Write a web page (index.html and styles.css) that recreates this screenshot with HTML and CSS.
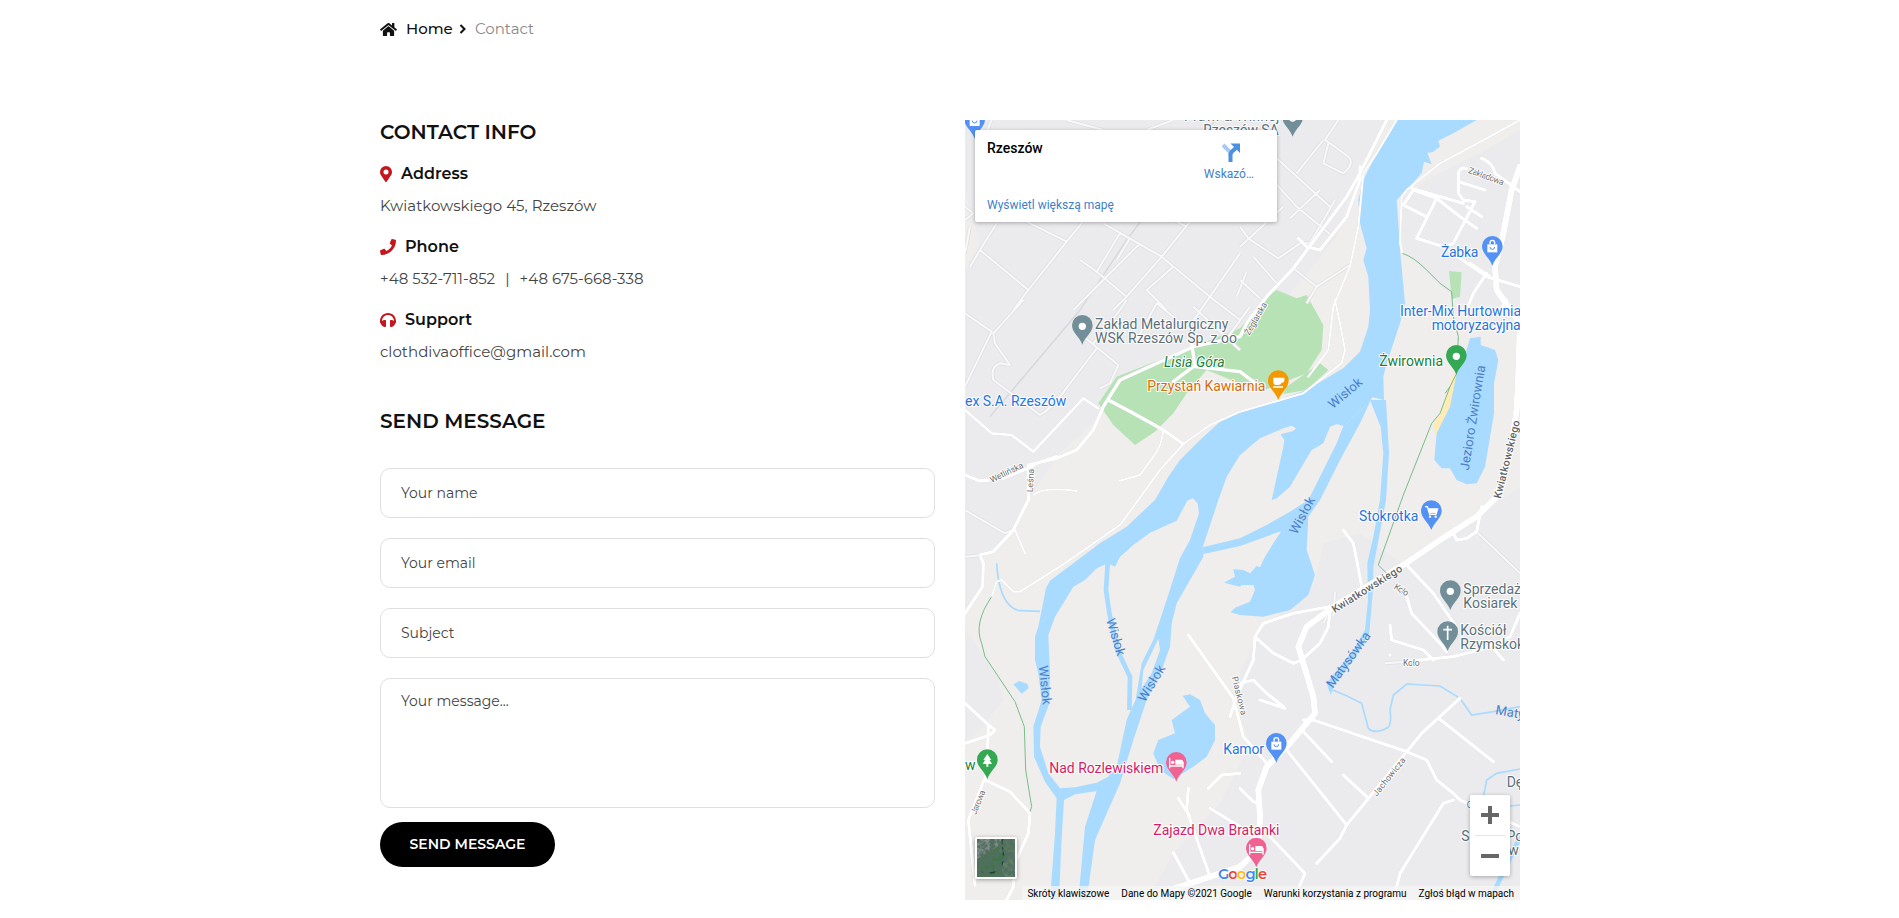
FILE: index.html
```html
<!DOCTYPE html>
<html lang="en">
<head>
<meta charset="utf-8">
<title>Contact</title>
<link rel="stylesheet" href="styles.css">
</head>
<body>
<div class="container">
  <nav class="breadcrumb">
    <svg class="home-icon" viewBox="0 0 576 512"><path d="M280.4 148.3 96 300.1V464a16 16 0 0 0 16 16l112-.3a16 16 0 0 0 16-16V368a16 16 0 0 1 16-16h64a16 16 0 0 1 16 16v95.6a16 16 0 0 0 16 16l112 .3a16 16 0 0 0 16-16V300L295.7 148.300a12.200 12.200 0 0 0-15.300 0zM571.600 251.500 488 182.600V44a12 12 0 0 0-12-12h-56a12 12 0 0 0-12 12v72.600L318.500 43a48 48 0 0 0-61 0L4.300 251.500a12 12 0 0 0-1.600 16.900l25.500 31a12 12 0 0 0 16.900 1.600l235.200-193.700a12.200 12.200 0 0 1 15.300 0L530.900 301a12 12 0 0 0 16.900-1.600l25.500-31a12 12 0 0 0-1.700-16.900z"/></svg>
    <a class="crumb">Home</a>
    <svg class="chevron" viewBox="0 0 8 10"><path d="M1.500 1 5.500 5l-4 4"/></svg>
    <span class="crumb-current">Contact</span>
  </nav>
  <main class="columns">
    <section class="left">
      <h2 class="title title-info">CONTACT INFO</h2>
      <div class="details">
        <div>
          <h3 class="label"><svg class="ico pin-ico" viewBox="0 0 384 512"><path d="M172.300 501.700C27 291 0 269.400 0 192a192 192 0 0 1 384 0c0 77.400-27 99-172.300 309.700a24 24 0 0 1-39.400 0zM192 272a80 80 0 1 0 0-160 80 80 0 0 0 0 160z"/></svg><span>Address</span></h3>
          <p class="value">Kwiatkowskiego 45, Rzeszów</p>
        </div>
        <div>
          <h3 class="label"><svg class="ico" viewBox="0 0 512 512"><path d="M493.400 24.600l-104-24c-11.300-2.600-22.900 3.300-27.500 13.900l-48 112a24 24 0 0 0 6.900 28l60.600 49.600c-36 76.700-98.900 140.500-177.200 177.200l-49.600-60.600a24 24 0 0 0-28-6.900l-112 48C3.900 366.500-2 378.100.600 389.400l24 104C27.100 504.200 36.700 512 48 512c256.100 0 464-207.500 464-464 0-11.200-7.700-20.900-18.600-23.400z"/></svg><span>Phone</span></h3>
          <p class="value">+48 532-711-852<span class="bar">|</span>+48 675-668-338</p>
        </div>
        <div>
          <h3 class="label"><svg class="ico" viewBox="0 0 512 512"><path d="M256 32C114.500 32 0 146.500 0 288v48a32 32 0 0 0 17.700 28.600l14.400 7.200C34.200 429.600 83.500 480 144 480h24a24 24 0 0 0 24-24V280a24 24 0 0 0-24-24h-24c-31.300 0-59.700 13.500-80 34.900V288c0-105.900 86.100-192 192-192s192 86.100 192 192v2.900C427.700 269.500 399.300 256 368 256h-24a24 24 0 0 0-24 24v176a24 24 0 0 0 24 24h24c60.500 0 109.800-50.400 111.900-108.200l14.400-7.200A32 32 0 0 0 512 336v-48C512 146.500 397.500 32 256 32z"/></svg><span>Support</span></h3>
          <p class="value mail">clothdivaoffice@gmail.com</p>
        </div>
      </div>
      <h2 class="title title-send">SEND MESSAGE</h2>
      <form class="form">
        <input class="field" placeholder="Your name">
        <input class="field" placeholder="Your email">
        <input class="field" placeholder="Subject">
        <textarea class="field area" placeholder="Your message..."></textarea>
        <button class="send" type="button">SEND MESSAGE</button>
      </form>
    </section>
    <section class="map">
      <svg class="map-canvas" viewBox="15 30 1665 2340">
        <rect class="land" x="15" y="30" width="1665" height="2340"/>
        <g class="urban">
          <path d="M15 480 60 400 15 250V30H1280L1190 190 1130 380 1000 540 920 640 700 720 470 810 440 900 290 1040 15 1110Z"/>
          <path d="M15 1110 200 1060 290 1040 205 1170 160 1260 70 1340V1440L15 1500Z"/>
          <path d="M15 1560 60 1620 110 1700 130 1770 60 1860 15 1900Z"/>
          <path d="M1320 270 1400 210 1560 130 1680 60V590L1500 580 1330 420Z"/>
          <path d="M1340 1370 1680 1130V2370H900L780 2320 560 2370 640 2230 780 2080 870 1900 820 1770 840 1690 900 1560 1060 1430 1090 1300 1200 1270Z"/>
        </g>
        <g class="park">
          <path d="M415 880 470 800 650 730 840 655 920 560 950 540 1010 565 1040 555 1090 645 1085 720 1040 790 900 845 740 780 680 850 640 910 585 965 525 1005 460 945Z"/>
          <path d="M980 830 1080 760 1105 780 1040 840 970 852Z"/>
          <path d="M1467 483 1505 487 1500 560 1475 567Z"/>
        </g>
        <path class="sand" d="M1480 790 1492 800 1475 880 1430 975 1418 945 1440 910Z"/>
        <g class="water">
          <path d="M1310 30 1280 80 1240 150 1210 210 1195 270 1200 340 1220 415 1210 450 1225 500 1230 600 1225 650 1200 725 1150 775 1040 840 840 908 780 935 720 990 660 1050 625 1100 585 1170 500 1250 420 1300 270 1412 258 1435 235 1550 225 1580 225 1650 235 1690 245 1770 220 1850 222 1940 255 2015 290 2065 285 2170 270 2370H297L304 2200 312 2070 345 2053 412 2043 445 2000 410 2018 345 2032 300 2035 265 1990 240 1910 242 1850 268 1780 270 1690 265 1575 285 1520 340 1430 375 1410 410 1375 443 1360 465 1370 480 1340 520 1305 570 1268 650 1232 682 1172 698 1165 712 1178 740 1200 775 1170 800 1100 840 1035 900 985 970 955 995 947 1008 955 1000 963 962 973 973 990 970 1010 935 1170 950 1165 990 1130 1025 1070 1055 1020 1090 1000 1110 950 1130 942 1150 948 1230 875 1237 862 1272 870 1270 800 1280 760 1320 640 1335 580 1320 420 1315 340 1310 270 1320 260 1385 190 1392 155 1415 163 1402 128 1417 127 1440 110 1435 92 1480 70 1550 30Z"/>
          <path d="M1230 875 1200 940 1140 1050 1080 1170 1045 1220 1040 1320 1065 1395 1045 1455 990 1500 910 1520 840 1515 812 1507 832 1487 870 1475 885 1440 880 1425 840 1430 792 1418 825 1400 820 1378 850 1380 870 1390 890 1368 900 1372 915 1340 940 1300 964 1263 840 1308 730 1332 728 1312 840 1285 920 1245 990 1205 1045 1170 1080 1100 1130 1000 1150 948Z"/>
          <path d="M1230 870 1262 950 1270 1030 1260 1170 1240 1280 1222 1360 1224 1470 1215 1560 1180 1620 1120 1695 1100 1720 1112 1755 1122 1725 1180 1650 1228 1570 1238 1450 1240 1370 1265 1240 1278 1170 1287 1030 1278 870Z"/>
          <path d="M712 1175 717 1210 690 1290 660 1345 620 1470 580 1590 545 1660 527 1770 515 1795 500 1830 470 1970 445 2000 410 2043 375 2150 355 2370H380L405 2190 480 2020 520 1890 560 1770 605 1680 630 1610 635 1540 650 1480 690 1410 730 1340 728 1312 775 1170Z"/>
          <path d="M1530 685 1562 680 1562 705 1605 720 1615 750 1602 820 1602 910 1575 1070 1550 1120 1520 1123 1490 1110 1470 1075 1445 1075 1423 1050 1430 970 1470 890 1490 790 1520 720Z"/>
          <path d="M668 1757 690 1753 720 1770 735 1810 752 1830 765 1845V1890L740 1940 700 1970 640 2007 600 1980 580 1930 595 1890 645 1870 635 1830 690 1790Z"/>
          <path d="M160 1723 178 1713 203 1722 206 1735 185 1751Z"/>
        </g>
        <path class="land" d="M595 1586 600 1620 575 1690 545 1735 550 1680Z"/>
        <path class="land" d="M843 1425H880L883 1440 868 1475 830 1492Z"/>
        <g class="stream">
          <path class="wide" d="M443 1360 438 1440 448 1510 472 1620 510 1700 508 1800"/>
          <path d="M110 1360Q115 1440 140 1475 160 1502 185 1502L240 1504"/>
          <path d="M1105 1735 1155 1755 1205 1780 1225 1855Q1245 1875 1285 1852 1295 1840 1290 1800L1300 1755 1340 1722 1440 1728 1500 1765 1535 1815 1600 1805 1680 1790"/>
          <path d="M1680 1977 1610 1990 1580 2010 1570 2060 1630 2090 1680 2085"/><path class="wide" d="M1680 2180 1600 2350"/>
        </g>
        <path class="rail" d="M90 920 360 600 500 390 560 310 720 100 765 30"/>
        <g class="minor-edge">
          <path id="minor-roads" d="M110 340 60 420 205 540 160 600M60 420 30 470M205 540 320 395 430 260M200 335 320 395M430 340 605 440 750 560 840 630M360 450 410 485 500 560 460 600M410 485 480 370M510 385 470 450M605 440 500 560M605 440 690 335M680 350 620 320M605 440 640 470 560 540 620 600M840 430 750 560 680 660M15 290 40 310 15 330M30 350 15 430M320 30 430 60M95 30 70 90M640 30 560 60M15 610 95 665 15 830M190 570 100 670 105 700 150 765 120 760Q90 770 100 810L240 915Q280 890 300 860L410 715M340 655 475 765 450 820 420 835M400 700 480 600 500 570M530 690 590 580 640 620M840 260 870 320M870 320 910 180 1010 290 1120 380M950 145 1110 290M840 410 970 290M840 350 865 385 955 445 1020 400M1080 240 990 325M1135 30 1095 90 1125 110 1170 145Q1180 165 1150 190L1090 160 1105 100M1090 90 1010 190M1125 270 1050 400 1020 400M1000 475 1070 530 1170 465M1070 530 1040 580M840 510 900 565M860 485 830 560M950 520 880 440M15 1200 135 1270 165 1255M15 1340 70 1335M1120 1520 1125 1445M1110 1500 1090 1540M1680 1390 1550 1265M1275 1660 1340 1655M340 600 540 400M700 590 840 720M870 590 790 700"/>
          <use href="#minor-roads" class="minor-core"/>
        </g>
        <g class="road">
          <path class="main" d="M15 900 95 970 155 975 220 1025 370 865 415 895"/>
          <path class="med" d="M1280 30 1200 190 1160 260 1000 475 920 560 860 640 840 680 700 710 480 810 430 890 400 960 350 1020 290 1045 205 1065M205 1065V1170L160 1260 100 1325 60 1335 70 1360 68 1430 15 1510M290 1040 230 1060 215 1070 130 1105 60 1113 15 1095M445 870 520 910 610 960 670 1002M695 700 705 770 840 785 900 830M700 770 640 815M1200 170V210L1160 320 1080 420 1040 410 1015 385"/>
          <path d="M670 1002 600 1080 535 1170 480 1245 300 1370 180 1445 160 1445 125 1410 110 1415 95 1460M670 1002 750 945 840 905M840 905 1030 850 1145 760 1155 720 1140 640 1125 570M1310 30 1250 130 1210 190 1195 350 1170 470 1120 590 1105 720 1045 800M610 960Q605 1010 580 1040L540 1095 480 1112M220 1155Q250 1130 350 1143M165 1260 195 1330M1680 30 1580 85 1440 160 1340 240 1325 260 1320 400 1327 430"/>
          <path class="med" d="M1565 145Q1600 160 1605 190L1680 245M1520 175Q1500 170 1495 190V250L1510 270 1545 275 1480 400 1450 410 1370 385 1430 265 1360 240 1330 285 1400 320M1355 235 1510 280M1430 265 1500 320 1550 355M1495 215 1575 240M1520 290 1565 320M1450 410 1580 500 1680 530M1580 490 1540 550 1520 600M1590 500 1530 460M1620 600 1640 570"/>
          <path class="big" d="M1680 170 1655 240 1630 370 1605 470 1610 540 1680 640 1675 800 1670 900 1650 1030 1610 1160 1550 1220 1440 1290 1330 1365 1120 1490 1040 1550 1015 1610 1060 1760 1065 1810 990 1900 920 1970 895 2040 900 2120 895 2220 840 2270 750 2300 660 2330 610 2345"/>
          <path class="med" d="M1110 1490 1000 1510 910 1540 885 1580 880 1650 830 1760 810 1820M1110 1500 1105 1550 1080 1600 1025 1650 1000 1660 940 1630 885 1580M1340 1365 1420 1450 1485 1545M1205 1430 1190 1350 1180 1300 1150 1260M1290 1635V1635M1340 1460 1355 1510 1440 1600 1460 1625M1290 1545 1295 1590 1390 1620 1420 1650M1330 1655 1480 1640 1560 1620 1650 1580 1680 1510M1605 1620 1630 1650M1565 1190 1550 1265 1520 1285 1490 1290 1480 1270M840 1720 880 1710 920 1750 970 1790M685 1575 820 1765 850 1880 925 1965M840 2035 880 2075 900 2080M1030 1830 1060 1830 1340 1925 1400 1950 1430 2010 1480 2050 1500 2070 1680 2150M1500 1765 1385 1870 1160 2145M1440 1828 1600 1955M1030 1865 1115 1955M980 1920 1160 2145 1140 2185 1070 2260M1150 1995 1225 2065M1480 2070 1450 2080 1320 2290 1300 2370M930 2180 1035 2290 1000 2370M840 1990 785 1995 745 2035M900 1770 975 1795M750 2095 840 2150 920 2210M685 2035 680 2100 750 2300M655 2065 690 2120M640 2228 690 2320M15 1780 80 1840 105 1860 90 1875 15 1900M85 1850 80 1990 25 2130 45 2325M75 2010 150 2045 210 2110 205 2170 165 2260 160 2330 140 2370"/>
        </g>
        <path class="trail" d="M95 1460Q40 1540 65 1600L75 1640 165 1775 193 1850 197 1980 215 2090 210 2105M1327 430Q1360 440 1400 480L1440 520 1475 545 1480 620 1495 680 1490 790 1470 830 1455 850M1470 830 1440 910 1415 940 1330 1155 1255 1365 1290 1400"/>

        <g class="street">
          <text x="1523" y="188" textLength="112" transform="rotate(20 1523 188)">Zakładowa</text>
          <text x="868" y="677" textLength="108" transform="rotate(-60 868 677)">Żeglarska</text>
          <text x="95" y="1119" textLength="108" transform="rotate(-26 95 1119)">Wetlińska</text>
          <text x="218" y="1147" textLength="70" transform="rotate(-87 218 1147)">Leśna</text>
          <text x="48" y="2115" textLength="76" transform="rotate(-68 48 2115)">Jarowa</text>
          <text x="815" y="1702" textLength="118" transform="rotate(76 815 1702)">Piaskowa</text>
          <text x="1250" y="2060" textLength="140" transform="rotate(-51 1250 2060)">Jachowicza</text>
          <text x="1300" y="1435" textLength="46" transform="rotate(32 1300 1435)">Koło</text>
          <text x="1329" y="1668" textLength="50">Koło</text>
          <text x="1520" y="2095">G</text>
          <g class="street-big"><text x="1124" y="1510" textLength="242" transform="rotate(-32 1124 1510)">Kwiatkowskiego</text>
          <text x="1622" y="1167" textLength="240" transform="rotate(-76 1622 1167)">Kwiatkowskiego</text></g>
        </g>
        <g class="water-label">
          <text x="1118" y="898" textLength="120" transform="rotate(-40 1118 898)">Wisłok</text>
          <text x="1010" y="1275" textLength="120" transform="rotate(-62 1010 1275)">Wisłok</text>
          <text x="438" y="1530" textLength="115" transform="rotate(73 438 1530)">Wisłok</text>
          <text x="236" y="1668" textLength="118" transform="rotate(84 236 1668)">Wisłok</text>
          <text x="555" y="1778" textLength="120" transform="rotate(-59 555 1778)">Wisłok</text>
          <text x="1118" y="1736" textLength="196" transform="rotate(-54 1118 1736)">Matysówka</text>
          <text x="1526" y="1082" textLength="318" transform="rotate(-81 1526 1082)">Jezioro Żwirownia</text>
          <text x="1605" y="1812" transform="rotate(10 1605 1812)">Matysówka</text>
        </g>
        <g class="poi gray">
          <text x="672" y="33" textLength="286">Praw. &amp; Winnej</text><text x="730" y="75" textLength="226">Rzeszów SA</text>
          <text x="405" y="657" textLength="400">Zakład Metalurgiczny</text><text x="405" y="699" textLength="426">WSK Rzeszów Sp. z oo</text>
          <text x="1510" y="1453">Sprzedaż</text><text x="1510" y="1494">Kosiarek</text>
          <text x="1501" y="1575">Kościół</text><text x="1501" y="1617">Rzymskokatolicki</text>
          <text x="1640" y="2032">Dębina</text><text x="1504" y="2193">Szkoła Podst.</text><text x="1645" y="2234">w</text>
        </g>
        <g class="poi blue">
          <text x="15" y="888" textLength="304">ex S.A. Rzeszów</text>
          <text x="1443" y="441" textLength="112">Żabka</text><text x="1320" y="618" textLength="363">Inter-Mix Hurtownia</text><text x="1415" y="660" textLength="267">motoryzacyjna</text>
          <text x="1197" y="1232" textLength="178">Stokrotka</text><text x="790" y="1932" textLength="122">Kamor</text>
        </g>
        <g class="poi green"><text class="ital" x="612" y="771" textLength="182">Lisia Góra</text><text x="1258" y="768" textLength="191">Żwirownia</text><text x="15" y="1980">w</text></g>
        <g class="poi orange"><text x="562" y="842" textLength="354">Przystań Kawiarnia</text></g>
        <g class="poi pink"><text x="268" y="1989" textLength="342">Nad Rozlewiskiem</text><text x="580" y="2175" textLength="378">Zajazd Dwa Bratanki</text></g>

        <defs>
          <path id="pin" d="M0 0C-8-24-31-36-31-58A31 31 0 0 1 31-58C31-36 8-24 0 0Z"/>
          <g id="bag"><path class="w" d="M-15-67H15V-43H-15Z"/><path class="wl" d="M-7-67V-72A7 7 0 0 1 7-72V-67"/><path class="bl" d="M-7-59A7 7 0 0 0 7-59"/></g>
          <g id="bed"><path class="wl" d="M-20-74V-43M20-43V-62M-20-50H20"/><circle class="w" cx="-11" cy="-61" r="5"/><path class="w" d="M-3-69H14Q21-69 21-60V-54H-3Z"/></g>
        </defs>
        <g class="p-gray">
          <use href="#pin" x="367" y="704"/><circle class="w" cx="367" cy="649" r="11"/>
          <use href="#pin" x="998" y="80"/><circle class="w" cx="998" cy="24" r="11"/>
          <use href="#pin" x="1471" y="1500"/><circle class="w" cx="1471" cy="1444" r="11"/>
          <use href="#pin" x="1463" y="1623"/><path class="wl cross" d="M1463 1547V1590M1450 1559H1476"/>
        </g>
        <g class="p-blue">
          <use href="#pin" x="44" y="86"/><use href="#bag" x="44" y="91"/>
          <use href="#pin" x="1597" y="467"/><use href="#bag" x="1597" y="470"/>
          <use href="#pin" x="949" y="1958"/><use href="#bag" x="949" y="1962"/>
          <use href="#pin" x="1414" y="1260"/><path class="wl" d="M1395 1190H1402L1409 1213H1428L1433 1197H1405"/><path class="w" d="M1405 1197H1433L1428 1210H1409Z"/><circle class="w" cx="1410" cy="1220" r="3.500"/><circle class="w" cx="1427" cy="1220" r="3.500"/>
        </g>
        <g class="p-green"><use href="#pin" x="1489" y="794"/><circle class="w" cx="1489" cy="739" r="11"/><use href="#pin" x="82" y="2007"/><path class="w" d="M82 1932 94 1950H89L96 1962H85V1970H79V1962H68L75 1950H70Z"/></g>
        <g class="p-orange"><use href="#pin" x="955" y="870"/><path class="w" d="M940 803H973V812Q973 818 965 818 962 825 955 825H950Q940 825 940 815ZM939 829H969V833H939Z"/></g>
        <g class="p-pink"><use href="#pin" x="649" y="2015"/><use href="#bed" x="649" y="2018"/><use href="#pin" x="889" y="2272"/><use href="#bed" x="889" y="2277"/></g>
        <text class="google" x="774" y="2307" textLength="147"><tspan fill="#4285f4">G</tspan><tspan fill="#ea4335">o</tspan><tspan fill="#fbbc05">o</tspan><tspan fill="#4285f4">g</tspan><tspan fill="#34a853">l</tspan><tspan fill="#ea4335">e</tspan></text>
      </svg>
      <div class="card">
        <div class="card-main"><strong class="place">Rzeszów</strong><a class="bigger">Wyświetl większą mapę</a></div>
        <a class="directions"><svg class="dir-icon" viewBox="0 0 22 22"><path class="dir-pale" d="M3 3 10 10V13"/><path class="dir-line" d="M10.500 20V13Q10.500 11 12 9.500L16 6"/><path class="dir-head" d="M10.500 1.500H20V11Z"/></svg>Wskazó…</a>
      </div>
      <div class="zoom"><span class="zoom-btn"><svg viewBox="0 0 18 18"><path d="M9 0V18M0 9H18"/></svg></span><i class="zoom-sep"></i><span class="zoom-btn"><svg viewBox="0 0 18 18"><path d="M0 9H18"/></svg></span></div>
      <div class="satellite"><svg viewBox="0 0 38 38"><defs><filter id="grain" x="0" y="0" width="1" height="1"><feTurbulence type="fractalNoise" baseFrequency=".22" numOctaves="4" seed="4"/><feColorMatrix values="0 0 0 0 .08  0 0 0 0 .16  0 0 0 0 .12  3.500 0 0 0 -1.100"/></filter></defs><rect width="38" height="38" fill="#4b7350"/><path d="M0 0H25L20 8 8 15 0 20Z" fill="#858a8b"/><path d="M25 0H38V20L29 26 20 20Z" fill="#5c7a5c"/><path d="M7 28 22 13 31 16 18 33Z" fill="#3f7544"/><path d="M24 24 38 20V38H26Z" fill="#68806a"/><path d="M0 31Q12 37 20 32T26 12 27 0" fill="none" stroke="#1f4038" stroke-width="1.500"/><rect width="38" height="38" filter="url(#grain)"/></svg></div>
      <div class="legal"><span>Skróty klawiszowe</span><span>Dane do Mapy ©2021 Google</span><span>Warunki korzystania z programu</span><span>Zgłoś błąd w mapach</span></div>
    </section>
  </main>
</div>
</body>
</html>
```
FILE: styles.css
```css
* { box-sizing: border-box; }
body { margin: 0; background: #fff; color: #111; font-family: Montserrat, Inter, "Noto Sans", sans-serif; overflow: hidden; }
h2, h3, p { margin: 0; }
.container { width: 1140px; margin-left: 380px; padding-top: 18px; }
.breadcrumb { display: flex; align-items: center; height: 22px; font-size: 15px; font-weight: 500; line-height: 22px; }
.home-icon { width: 17px; height: 15px; margin-right: 9px; fill: #111; }
.crumb { width: 46px; }
.chevron { width: 8px; height: 10px; margin: 0 8px 0 7px; fill: none; stroke: #111; stroke-width: 2; }
.crumb-current { color: #888; font-weight: 400; }
.columns { display: grid; grid-template-columns: 555px 555px; gap: 30px; margin-top: 80px; }
.title { height: 24px; font-size: 20px; line-height: 24px; font-weight: 600; white-space: nowrap; }
.title-send { margin-top: 44px; }
.details { display: flex; flex-direction: column; gap: 16px; margin-top: 18px; }
.label { display: flex; align-items: center; height: 24px; font-size: 16px; font-weight: 600; line-height: 24px; }
.ico { width: 16px; height: 16px; margin-right: 9px; fill: #c4161c; }
.pin-ico { width: 12px; margin-right: 9px; }
.value { margin-top: 8px; height: 25px; font-size: 15px; line-height: 24px; color: #444; font-weight: 400; white-space: nowrap; }
.mail { letter-spacing: 0.03px; }
.bar { margin: 0 10px; }
.form { display: flex; flex-direction: column; align-items: flex-start; gap: 20px; margin-top: 35px; }
.field { width: 555px; height: 50px; padding: 0 20px; border: 1px solid #dedfe0; border-radius: 10px; background: #fff; font-family: inherit; font-size: 14px; font-weight: 400; outline: none; }
.field::placeholder { color: #444; opacity: 1; }
.area { height: 130px; padding: 13px 20px; resize: none; line-height: 18px; }
.send { width: 175px; height: 45px; margin-top: -6px; padding: 0 0 2px; border: 0; border-radius: 23px; background: #000; color: #fff; font-family: inherit; font-size: 14px; font-weight: 600; }

.map { position: relative; width: 555px; height: 780px; overflow: hidden; font-family: Roboto, sans-serif; }
.map-canvas { display: block; width: 555px; height: 780px; }
.land { fill: #efeeec; }
.urban { fill: #ebebed; }
.park { fill: #b7e2b6; }
.sand { fill: #feebb5; }
.water { fill: #a9daff; }
.stream { fill: none; stroke: #a9daff; stroke-width: 5; }
.stream .wide { stroke-width: 14; }
.rail { fill: none; stroke: #d6d7d9; stroke-width: 4; }
.minor-edge { fill: none; stroke: #dfe0e3; stroke-width: 11; stroke-linejoin: round; }
.minor-core { stroke: #f8f8f9; stroke-width: 6; }
.road { fill: none; stroke: #fff; stroke-width: 6; stroke-linejoin: round; stroke-linecap: round; filter: drop-shadow(0 0 1.500px #c8cbd0); }
.road .med { stroke-width: 10; }
.road .main { stroke-width: 8; }
.road .big { stroke-width: 19; }
.trail { fill: none; stroke: #79bd8b; stroke-width: 3; }
.street { font-size: 26px; fill: #6d6f72; stroke: #fff; stroke-width: 5; paint-order: stroke; }
.street-big { font-size: 32px; fill: #606368; font-weight: 500; }
.water-label { font-size: 39px; fill: #4b7fc7; }
.poi { font-size: 42px; stroke: #fff; stroke-width: 6; stroke-linejoin: round; paint-order: stroke; }
.gray { fill: #5b7079; }
.blue { fill: #2673e0; }
.green { fill: #16803c; }
.orange { fill: #d46b0b; }
.pink { fill: #d41b68; }
.ital { font-style: italic; }
.p-gray { fill: #728e99; }
.p-blue { fill: #5491f5; }
.p-green { fill: #34a853; }
.p-orange { fill: #f29900; }
.p-pink { fill: #f06292; }
.w { fill: #fff; }
.wl { fill: none; stroke: #fff; stroke-width: 4; }
.bl { fill: none; stroke: #5491f5; stroke-width: 3; }
.cross { stroke-width: 5; }
.google { font-family: Montserrat, Lato, sans-serif; font-size: 44px; font-weight: 600; stroke: #fff; stroke-width: 4; paint-order: stroke; }

.card { position: absolute; left: 10px; top: 10px; display: flex; justify-content: space-between; width: 302px; height: 92px; padding: 9px 23px 8px 12px; background: #fff; border-radius: 2px; box-shadow: 0 1px 4px rgba(0,0,0,.3); font-size: 12px; }
.card-main { display: flex; flex-direction: column; justify-content: space-between; }
.place { font-size: 14px; line-height: 18px; font-weight: 500; color: #000; }
.bigger { color: #3f7fcb; line-height: 17px; }
.directions { display: flex; flex-direction: column; align-items: center; color: #3f7fcb; line-height: 16px; padding-top: 2px; }
.dir-icon { width: 22px; height: 22px; margin: 1px 0 2px 4px; fill: none; }
.dir-line { stroke: #4d8fe0; stroke-width: 4; }
.dir-pale { stroke: #a9c8f2; stroke-width: 4; }
.dir-head { fill: #4d8fe0; }
.zoom { position: absolute; left: 505px; top: 675px; display: flex; flex-direction: column; align-items: center; width: 40px; height: 81px; background: #fff; border-radius: 2px; box-shadow: 0 1px 4px rgba(0,0,0,.3); }
.zoom-btn { display: flex; align-items: center; justify-content: center; width: 40px; height: 40px; }
.zoom-btn svg { width: 18px; height: 18px; stroke: #666; stroke-width: 4; }
.zoom-sep { width: 30px; height: 1px; background: #e6e6e6; }
.satellite { position: absolute; left: 10px; top: 717px; width: 42px; height: 42px; border: 2px solid #fff; border-radius: 2px; box-shadow: 0 1px 4px rgba(0,0,0,.35); }
.satellite svg { display: block; width: 38px; height: 38px; }
.legal { position: absolute; right: 0; bottom: 0; display: flex; justify-content: flex-end; gap: 12px; width: 498px; height: 14px; padding: 1px 6px 0 0; background: rgba(245,245,245,.75); color: #000; font-size: 10px; line-height: 14px; white-space: nowrap; }
```
